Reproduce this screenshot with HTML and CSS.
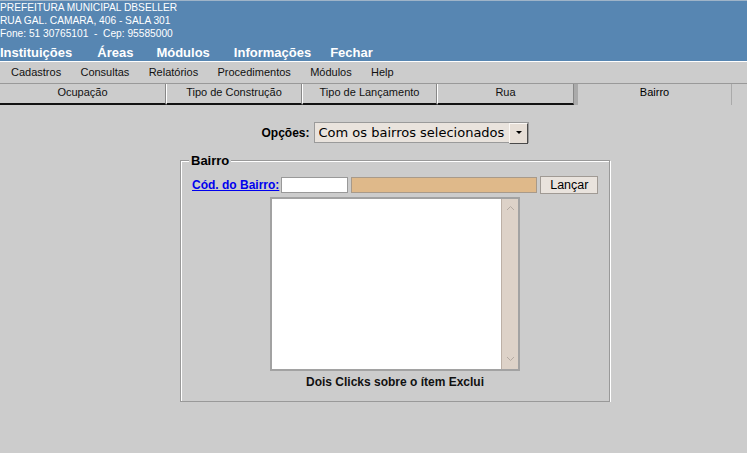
FILE: index.html
```html
<!DOCTYPE html>
<html lang="pt">
<head>
<meta charset="utf-8">
<title>Bairro</title>
<link rel="stylesheet" href="styles.css">
</head>
<body>
<header class="top">
  <div class="org">
    <div class="org-line">PREFEITURA MUNICIPAL DBSELLER</div>
    <div class="org-line">RUA GAL. CAMARA, 406 - SALA 301</div>
    <div class="org-line">Fone: 51 30765101  -  Cep: 95585000</div>
  </div>
  <nav class="mainmenu">
    <span class="mm mm-1">Instituições</span>
    <span class="mm mm-2">Áreas</span>
    <span class="mm mm-3">Módulos</span>
    <span class="mm mm-4">Informações</span>
    <span class="mm mm-5">Fechar</span>
  </nav>
</header>
<nav class="submenu">
  <span>Cadastros</span>
  <span>Consultas</span>
  <span>Relatórios</span>
  <span>Procedimentos</span>
  <span>Módulos</span>
  <span>Help</span>
</nav>
<div class="tabs">
  <div class="tab tab-1">Ocupação</div>
  <div class="tab tab-2">Tipo de Construção</div>
  <div class="tab tab-3">Tipo de Lançamento</div>
  <div class="tab tab-4">Rua</div>
  <div class="tab tab-sel">Bairro</div>
  <div class="tab-rest"></div>
</div>
<main class="content">
  <div class="options">
    <label class="opt-label" for="opcoes">Opções:</label>
    <div class="selectwrap">
      <select id="opcoes" class="opt-select">
        <option>Com os bairros selecionados</option>
        <option>Sem os bairros selecionados</option>
      </select>
    </div>
  </div>
  <fieldset class="box">
    <legend>Bairro</legend>
    <div class="row">
      <a class="code-link" href="#">Cód. do Bairro:</a>
      <input class="code" type="text">
      <input class="name" type="text" readonly>
      <button class="btn" type="button">Lançar</button>
    </div>
    <div class="listbox">
      <div class="list-area"></div>
      <div class="scrollbar">
        <svg class="chev" width="9" height="6" viewBox="0 0 9 6"><polyline points="1,5 4.5,1.5 8,5" fill="none" stroke="#b4aaa2" stroke-width="1"/></svg>
        <svg class="chev" width="9" height="6" viewBox="0 0 9 6"><polyline points="1,1 4.5,4.5 8,1" fill="none" stroke="#b4aaa2" stroke-width="1"/></svg>
      </div>
    </div>
    <p class="hint">Dois Clicks sobre o ítem Exclui</p>
  </fieldset>
</main>
</body>
</html>
```
FILE: styles.css
```css
* { box-sizing: border-box; }

body {
  margin: 0;
  background: #cccccc;
  font-family: "Liberation Sans", Arial, sans-serif;
  color: #000;
}

.top {
  background: #5786b2;
  color: #fff;
  border-top: 1px solid #9fb4c8;
  border-bottom: 1px solid #ffffff;
}

.org {
  font-size: 10.2px;
  line-height: 13px;
}
.org-line {
  white-space: pre;
  height: 13px;
}

.mainmenu {
  display: flex;
  font-size: 13px;
  font-weight: bold;
  line-height: 16px;
  padding-top: 5px;
  height: 21px;
}
.mm-2 { margin-left: 25px; }
.mm-3 { margin-left: 23px; }
.mm-4 { margin-left: 24px; }
.mm-5 { margin-left: 19px; }

.submenu {
  display: flex;
  gap: 19.3px;
  padding-left: 11px;
  height: 21px;
  line-height: 21px;
  font-size: 11px;
  color: #111;
}

.tabs {
  display: flex;
  border-top: 1px solid #999;
  height: 22px;
}
.tab {
  height: 21px;
  border-left: 1px solid #fff;
  border-right: 1px solid #888;
  border-bottom: 2px solid #111;
  text-align: center;
  font-size: 11px;
  line-height: 16px;
  color: #111;
}
.tab-1 { width: 166px; border-left: 0; }
.tab-2 { width: 136px; }
.tab-3 { width: 135px; }
.tab-4 { width: 137px; }
.tab-sel {
  width: 158px;
  border-left: 4px solid #aaaaaa;
  border-right: 1px solid #aaaaaa;
  border-bottom: 0;
  color: #000;
}
.tab-rest { flex: 1; }

.content {
  width: 430px;
  margin-left: 180px;
}

.options {
  display: flex;
  justify-content: center;
  align-items: center;
  gap: 4px;
  margin-top: 17px;
  height: 21px;
}
.opt-label {
  font-size: 12px;
  font-weight: bold;
}
.selectwrap {
  position: relative;
  width: 215px;
  height: 21px;
}
.opt-select {
  appearance: none;
  -webkit-appearance: none;
  width: 100%;
  height: 100%;
  margin: 0;
  border: 1px solid #9a9a9a;
  border-radius: 0;
  background: #e9e3dd;
  font-family: "DejaVu Sans", sans-serif;
  font-size: 13px;
  padding: 0 0 0 4px;
  color: #000;
}
.selectwrap::after {
  content: "";
  position: absolute;
  right: 1px;
  top: 1px;
  width: 17px;
  height: 19px;
  background: #e6ded6;
  border: 1px solid;
  border-color: #fbf8f5 #4a4a4a #4a4a4a #fbf8f5;
  pointer-events: none;
}
.selectwrap::before {
  content: "";
  position: absolute;
  z-index: 1;
  right: 7px;
  top: 9px;
  border-left: 3px solid transparent;
  border-right: 3px solid transparent;
  border-top: 3px solid #000;
  pointer-events: none;
}

.box {
  margin: 10px 0 0;
  padding: 8px 11px 12px;
  border: 1px solid #999;
  box-shadow: inset 1px 1px 0 #fff, 1px 1px 0 #fff;
  min-width: 0;
}
.box legend {
  font-size: 13px;
  font-weight: bold;
  line-height: 15px;
  padding: 0 2px;
  margin-left: -3px;
  background: #cccccc;
}

.row {
  display: flex;
  align-items: center;
  gap: 3px;
  height: 17px;
  white-space: nowrap;
}
.code-link {
  flex: none;
  color: #0000ee;
  font-size: 12px;
  font-weight: bold;
  margin-right: -1px;
}
.code, .name {
  flex: none;
  height: 16px;
  margin: 0;
  border: 1px solid #999;
  padding: 0 2px;
  font-size: 12px;
}
.code { width: 67px; background: #fff; }
.name { width: 186px; background: #dfb98a; border-color: #a89a8a; }
.btn {
  flex: none;
  width: 58px;
  height: 18px;
  margin: 0;
  padding: 0;
  background: #e9e3dd;
  border: 1px solid #a09a94;
  border-radius: 0;
  font-family: "Liberation Sans", Arial, sans-serif;
  font-size: 12.5px;
  color: #000;
}

.listbox {
  display: flex;
  width: 250px;
  height: 174px;
  margin: 4px auto 0;
  border: 2px solid #a2a2a2;
  background: #fff;
}
.list-area { flex: 1; }
.scrollbar {
  width: 17px;
  background: #ddd2c8;
  border-left: 1px solid #bcb0a6;
  display: flex;
  flex-direction: column;
  justify-content: space-between;
  align-items: center;
  padding: 6px 0 7px;
}
.chev { display: block; }

.hint {
  margin: 4px 0 0;
  text-align: center;
  font-size: 12px;
  font-weight: bold;
  color: #111;
}
```
